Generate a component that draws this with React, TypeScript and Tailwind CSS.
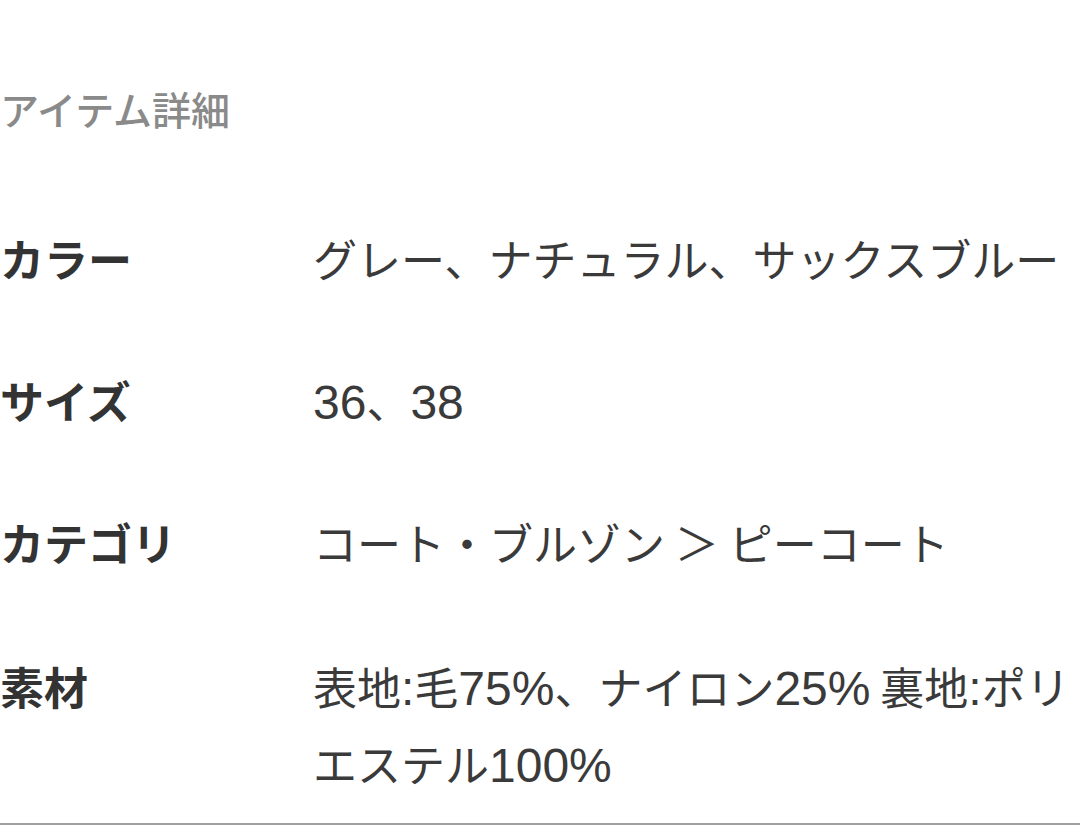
import React from "react";

const rows: { label: string; value: string }[] = [
  { label: "カラー", value: "グレー、ナチュラル、サックスブルー" },
  { label: "サイズ", value: "36、38" },
  { label: "カテゴリ", value: "コート・ブルゾン ＞ ピーコート" },
  { label: "素材", value: "表地:毛75%、ナイロン25% 裏地:ポリエステル100%" },
];

function Mixed({ text }: { text: string }) {
  const parts = text.split(/([0-9%:]+)/).filter((p) => p.length > 0);
  return (
    <>
      {parts.map((p, i) =>
        /^[0-9%:]+$/.test(p) ? (
          <span
            key={i}
            className="text-[48px] leading-none"
            style={{ fontFamily: '"Liberation Sans", sans-serif' }}
          >
            {p}
          </span>
        ) : (
          <React.Fragment key={i}>
            {Array.from(p).map((ch, j) => (
              <span key={j}>{ch}</span>
            ))}
          </React.Fragment>
        )
      )}
    </>
  );
}

export default function App() {
  return (
    <div
      className="w-[1080px] h-[825px] bg-white flex flex-col overflow-hidden"
      style={{ fontFamily: '"Noto Sans CJK JP", "Noto Sans", sans-serif' }}
    >
      <div className="mt-[80px] text-[39px] leading-[56px] font-medium text-[#8a8a8a]">
        アイテム詳細
      </div>
      <div className="mt-[84px] flex flex-col gap-[65px]">
        {rows.map((r, idx) => (
          <div key={r.label} className={idx === 3 ? "flex mt-[2px]" : "flex"}>
            <div className="w-[313px] shrink-0 text-[44px] leading-[77px] font-bold text-[#333333]">
              {r.label}
            </div>
            <div className="w-[767px] text-[44px] leading-[77px] text-[#3a3a3a]">
              <Mixed text={r.value} />
            </div>
          </div>
        ))}
      </div>
      <div className="mt-auto h-[2px] bg-[#a0a0a0]" />
    </div>
  );
}
